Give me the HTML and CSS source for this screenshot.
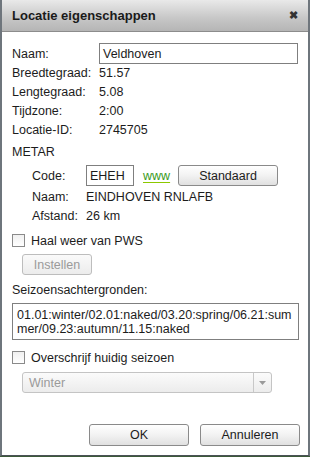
FILE: index.html
```html
<!DOCTYPE html>
<html>
<head>
<meta charset="utf-8">
<link rel="stylesheet" href="styles.css">
</head>
<body>
<div class="window">
  <div class="titlebar">
    <span class="title">Locatie eigenschappen</span>
    <span class="close">&#10006;</span>
  </div>
  <div class="content">
    <div class="row name-row">
      <span class="label">Naam:</span>
      <div class="input name-input">Veldhoven</div>
    </div>
    <div class="row info"><span class="label">Breedtegraad:</span><span>51.57</span></div>
    <div class="row info"><span class="label">Lengtegraad:</span><span>5.08</span></div>
    <div class="row info"><span class="label">Tijdzone:</span><span>2:00</span></div>
    <div class="row info"><span class="label">Locatie-ID:</span><span>2745705</span></div>
    <div class="section-title">METAR</div>
    <div class="metar">
      <div class="row code-row">
        <span class="mlabel">Code:</span>
        <div class="input code-input">EHEH</div>
        <span class="www">www</span>
        <div class="btn std-btn">Standaard</div>
      </div>
      <div class="row minfo"><span class="mlabel">Naam:</span><span>EINDHOVEN RNLAFB</span></div>
      <div class="row minfo"><span class="mlabel">Afstand:</span><span>26 km</span></div>
    </div>
    <div class="check-row pws">
      <span class="checkbox"></span><span>Haal weer van PWS</span>
    </div>
    <div class="btn disabled inst-btn">Instellen</div>
    <div class="section-title seasons-title">Seizoensachtergronden:</div>
    <div class="textarea">01.01:winter/02.01:naked/03.20:spring/06.21:summer/09.23:autumn/11.15:naked</div>
    <div class="check-row over">
      <span class="checkbox"></span><span>Overschrijf huidig seizoen</span>
    </div>
    <div class="select">
      <span class="select-value">Winter</span>
      <span class="select-arrow"><svg width="7" height="4" viewBox="0 0 7 4"><path d="M0 0h7L3.5 4z" fill="#9a9a9a"/></svg></span>
    </div>
    <div class="footer">
      <div class="btn foot-btn">OK</div>
      <div class="btn foot-btn">Annuleren</div>
    </div>
  </div>
</div>
</body>
</html>
```
FILE: styles.css
```css
html, body {
  margin: 0;
  padding: 0;
}
body {
  width: 310px;
  height: 457px;
  background: #3d5a3a;
  font-family: "Liberation Sans", Arial, sans-serif;
  font-size: 12.5px;
  color: #1c1c1c;
  overflow: hidden;
}
.window {
  width: 306px;
  height: 455px;
  border-left: 2px solid #6e757c;
  border-right: 2px solid #6e757c;
  border-bottom: 1px solid #4b5257;
  background: #fff;
  display: flex;
  flex-direction: column;
}
.titlebar {
  height: 31px;
  border-bottom: 1px solid #8c8c8c;
  background: linear-gradient(#e9e9e9, #c6c6c6 60%, #b5b5b5);
  display: flex;
  align-items: center;
  justify-content: space-between;
  padding: 0 10px 0 10px;
  flex-shrink: 0;
}
.title {
  font-weight: bold;
  font-size: 13px;
  color: #1a1a1a;
}
.close {
  font-size: 11px;
  color: #333;
  font-weight: bold;
}
.content {
  padding: 11px 8px 0 10px;
  display: flex;
  flex-direction: column;
  flex: 1;
}
.row {
  display: flex;
  align-items: center;
}
.label {
  width: 87px;
  flex-shrink: 0;
}
.input {
  box-sizing: border-box;
  border: 1px solid #7f7f7f;
  background: #fff;
  display: flex;
  align-items: center;
}
.name-input {
  width: 199px;
  height: 21px;
  padding-left: 3px;
}
.info {
  height: 19px;
}
.name-row + .info {
  margin-top: -1px;
}
.section-title {
  height: 19px;
  display: flex;
  align-items: center;
  margin-top: 3px;
}
.metar {
  padding-left: 20px;
  display: flex;
  flex-direction: column;
}
.code-row {
  margin-top: 4px;
  height: 21px;
}
.mlabel {
  width: 54px;
  flex-shrink: 0;
}
.code-input {
  width: 48px;
  height: 21px;
  padding-left: 3px;
}
.www {
  color: #3a9a1c;
  margin-left: 9px;
  text-decoration: underline;
  text-decoration-color: #8cc800;
  text-underline-offset: 2px;
  width: 35px;
}
.btn {
  box-sizing: border-box;
  border: 1px solid #8a8a8a;
  border-radius: 3px;
  background: linear-gradient(#ffffff, #f2f2f2 50%, #e0e0e0);
  display: flex;
  align-items: center;
  justify-content: center;
  color: #1c1c1c;
}
.std-btn {
  width: 100px;
  height: 21px;
}
.minfo {
  height: 19px;
}
.code-row + .minfo {
  margin-top: 1px;
}
.check-row {
  display: flex;
  align-items: center;
  height: 19px;
}
.pws {
  margin-top: 6px;
}
.checkbox {
  width: 11px;
  height: 11px;
  border: 1px solid #8a8a8a;
  background: linear-gradient(#f0f0f0, #ffffff);
  margin-right: 6px;
  flex-shrink: 0;
}
.disabled {
  color: #9a9a9a;
  border-color: #bdbdbd;
  background: linear-gradient(#fafafa, #ececec);
}
.inst-btn {
  width: 70px;
  height: 21px;
  margin-left: 10px;
  margin-top: 4px;
}
.seasons-title {
  margin-top: 5px;
}
.textarea {
  box-sizing: border-box;
  width: 287px;
  height: 37px;
  border: 1px solid #7f7f7f;
  margin-top: 4px;
  padding: 4px 3px 0 4px;
  line-height: 14px;
  word-break: break-all;
}
.over {
  margin-top: 8px;
}
.select {
  box-sizing: border-box;
  width: 250px;
  height: 21px;
  margin-left: 10px;
  margin-top: 5px;
  border: 1px solid #c4c4c4;
  border-radius: 3px;
  background: linear-gradient(#fbfbfb, #ececec);
  display: flex;
  align-items: center;
  color: #9a9a9a;
}
.select-value {
  flex: 1;
  padding-left: 6px;
}
.select-arrow {
  width: 17px;
  height: 100%;
  border-left: 1px solid #c8c8c8;
  display: flex;
  align-items: center;
  justify-content: center;
}
.footer {
  margin-top: auto;
  margin-bottom: 9px;
  display: flex;
  justify-content: flex-end;
  gap: 11px;
}
.foot-btn {
  width: 100px;
  height: 22px;
}
```
